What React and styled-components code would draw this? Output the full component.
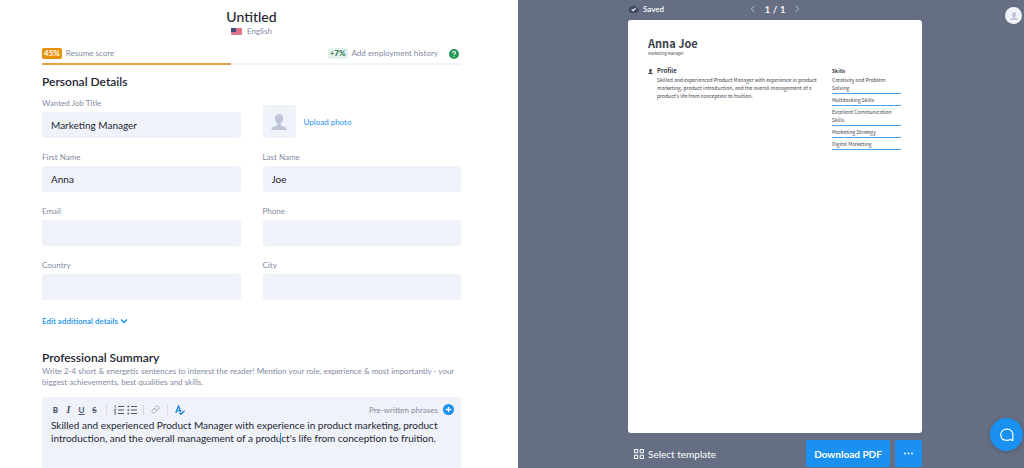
import React from "react"
import styled, { createGlobalStyle } from "styled-components"

const fields = [
  { id: "first", label: "First Name", value: "Anna" },
  { id: "last", label: "Last Name", value: "Joe" },
  { id: "email", label: "Email", value: "" },
  { id: "phone", label: "Phone", value: "" },
  { id: "country", label: "Country", value: "" },
  { id: "city", label: "City", value: "" },
]

const skills = [
  "Creativity and Problem Solving",
  "Multitasking Skills",
  "Excellent Communication Skills",
  "Marketing Strategy",
  "Digital Marketing",
]

const summary =
  "Skilled and experienced Product Manager with experience in product marketing, product introduction, and the overall management of a product's life from conception to fruition."

const Person = ({ size }) => (
  <svg width={size} height={size} viewBox="0 0 16 16" fill="currentColor" aria-hidden="true">
    <path d="M8 0C5.600 0 4 1.700 4 4.300c0 2.100.9 4 2.200 5v1.500c0 .6-.4.9-1 1.100l-3.300 1C.9 13.300.5 14.200.5 16h15c0-1.800-.4-2.700-1.400-3.100l-3.300-1c-.6-.2-1-.5-1-1.100V9.300c1.300-1 2.200-2.900 2.200-5C12 1.700 10.400 0 8 0z" />
  </svg>
)

const Flag = () => (
  <svg width="11" height="7" viewBox="0 0 11 7" aria-hidden="true">
    <rect width="11" height="7" rx="1" fill="#d9607a" />
    <path d="M5 1.300h6M5 3.200h6M0 4.900h11M0 6.300h11" stroke="#e9a4b2" strokeWidth=".5" />
    <rect width="5" height="4" fill="#414c7c" />
  </svg>
)

const Chevron = ({ d, size = 8, width = 1.5 }) => (
  <svg width={size} height={size} viewBox="0 0 8 8" fill="none" stroke="currentColor" strokeWidth={width} aria-hidden="true">
    <path d={d} />
  </svg>
)

const ListIcon = ({ numbered }) => (
  <svg width="10" height="10" viewBox="0 0 10 10" fill="none" stroke="currentColor" aria-hidden="true">
    <path d="M4 1.500h6M4 5h6M4 8.500h6" strokeWidth="1.200" />
    {numbered ? (
      <path d="M.4 1l.9-.6v2.400M.3 4.200h1.600L.4 6h1.700M.3 7.400h1.600l-.8.900c1.300 0 1 1.300-.9 1.100" strokeWidth=".7" />
    ) : (
      <path d="M.5 1.500h1.700M.5 5h1.700M.5 8.500h1.700" strokeWidth="1.700" />
    )}
  </svg>
)

const App = () => {
  return (
    <>
      <GlobalStyle />
      <Shell>
        <Editor>
          <Header>
            <Title>Untitled</Title>
            <Language type="button">
              <Flag />
              English
            </Language>
          </Header>

          <Score>
            <Badge>45%</Badge>
            <span>Resume score</span>
            <Tip>
              <Badge $soft>+7%</Badge>
              <span>Add employment history</span>
              <Help type="button" aria-label="Help">
                <svg width="10" height="10" viewBox="0 0 10 10" aria-hidden="true">
                  <circle cx="5" cy="5" r="5" fill="#259a58" />
                  <path d="M3.500 4.100C3.500 1.900 6.600 2 6.500 4 6.400 4.900 5.100 4.900 5 5.800M5 6.700v1" fill="none" stroke="#fff" strokeWidth="1.100" />
                </svg>
              </Help>
            </Tip>
          </Score>
          <Track>
            <Bar style={{ width: "45%" }} />
          </Track>

          <Heading>Personal Details</Heading>
          <Form>
            <Field>
              <Label htmlFor="job">Wanted Job Title</Label>
              <Input id="job" defaultValue="Marketing Manager" />
            </Field>
            <Photo type="button">
              <PhotoBox>
                <Person size={16} />
              </PhotoBox>
              Upload photo
            </Photo>
            {fields.map(({ id, label, value }) => (
              <Field key={id}>
                <Label htmlFor={id}>{label}</Label>
                <Input id={id} defaultValue={value} />
              </Field>
            ))}
          </Form>
          <More type="button">
            Edit additional details
            <Chevron d="M1 2.500l3 3 3-3" />
          </More>

          <Heading>Professional Summary</Heading>
          <Hint>
            Write 2-4 short & energetic sentences to interest the reader! Mention your role, experience & most
            importantly - your biggest achievements, best qualities and skills.
          </Hint>
          <RichText>
            <Toolbar>
              <Tool type="button"><b>B</b></Tool>
              <Tool type="button"><Italic>I</Italic></Tool>
              <Tool type="button"><u>U</u></Tool>
              <Tool type="button"><s>S</s></Tool>
              <Divider />
              <Tool type="button" aria-label="Numbered list"><ListIcon numbered /></Tool>
              <Tool type="button" aria-label="Bulleted list"><ListIcon /></Tool>
              <Divider />
              <Tool type="button" $color="#a9adbd" aria-label="Link">
                <svg width="9" height="9" viewBox="0 0 24 24" fill="none" stroke="currentColor" strokeWidth="2.500" strokeLinecap="round" aria-hidden="true">
                  <path d="M10 13a5 5 0 0 0 7.500.5l3-3a5 5 0 0 0-7-7l-1.700 1.700M14 11a5 5 0 0 0-7.500-.5l-3 3a5 5 0 0 0 7 7l1.700-1.700" />
                </svg>
              </Tool>
              <Divider />
              <Tool type="button" $color="#1b86dc" aria-label="Spell check">
                <svg width="10" height="10" viewBox="0 0 10 10" fill="none" stroke="currentColor" strokeWidth="1.300" aria-hidden="true">
                  <path d="M.8 8L3.500 1 6 7M1.800 5.600h3.400M4.300 7.700l1.600 1.600 3.600-3.500" />
                </svg>
              </Tool>
              <Phrases type="button">
                Pre-written phrases
                <svg width="11" height="11" viewBox="0 0 11 11" aria-hidden="true">
                  <circle cx="5.500" cy="5.500" r="5.500" fill="#1a91f0" />
                  <path d="M5.500 2.700v5.600M2.700 5.500h5.600" stroke="#fff" strokeWidth="1.300" />
                </svg>
              </Phrases>
            </Toolbar>
            <TextWrap>
              <TextArea aria-label="Professional Summary" defaultValue={summary} />
              <Caret />
            </TextWrap>
          </RichText>
        </Editor>

        <Preview>
          <TopBar>
            <Saved>
              <svg width="11" height="8" viewBox="0 0 11 8" aria-hidden="true">
                <path d="M3 8a3 3 0 0 1-.5-5.800 3.500 3.500 0 0 1 6.200.5A2.700 2.700 0 0 1 8.300 8z" fill="#414960" />
                <path d="M3.800 4.400l1.400 1.300 2.400-2.600" fill="none" stroke="#fff" strokeWidth="1.100" />
              </svg>
              Saved
            </Saved>
            <Pager>
              <PageButton type="button" aria-label="Previous page"><Chevron d="M5.500.8L2.300 4l3.200 3.200" width={1} /></PageButton>
              <span>1 / 1</span>
              <PageButton type="button" aria-label="Next page"><Chevron d="M2.500.8L5.700 4 2.500 7.200" width={1} /></PageButton>
            </Pager>
          </TopBar>

          <Sheet>
            <Name>Anna Joe</Name>
            <Role>Marketing Manager</Role>
            <Columns>
              <ProfileIcon><Person size={5} /></ProfileIcon>
              <div>
                <SheetHeading>Profile</SheetHeading>
                <SheetText>{summary}</SheetText>
              </div>
              <Skills>
                <SheetHeading $small>Skills</SheetHeading>
                <SkillList>
                  {skills.map((skill) => (
                    <Skill key={skill}>{skill}</Skill>
                  ))}
                </SkillList>
              </Skills>
            </Columns>
          </Sheet>

          <BottomBar>
            <Template type="button">
              <svg width="10" height="10" viewBox="0 0 10 10" fill="none" stroke="currentColor" aria-hidden="true">
                <path d="M.5.5h3.300v3.300H.5zM6.200.5h3.300v3.300H6.200zM.5 6.200h3.300v3.300H.5zM6.200 6.200h3.300v3.300H6.200z" />
              </svg>
              Select template
            </Template>
            <Primary type="button">Download PDF</Primary>
            <Primary type="button" $square aria-label="More options">
              <svg width="9" height="3" viewBox="0 0 9 3" fill="currentColor" aria-hidden="true">
                <circle cx="1" cy="1.500" r=".9" />
                <circle cx="4.500" cy="1.500" r=".9" />
                <circle cx="8" cy="1.500" r=".9" />
              </svg>
            </Primary>
          </BottomBar>

          <Account type="button" aria-label="Account"><Person size={8} /></Account>
          <Chat type="button" aria-label="Chat">
            <svg width="14" height="14" viewBox="0 0 14 14" fill="none" stroke="currentColor" strokeWidth="1.200" strokeLinejoin="round" aria-hidden="true">
              <path d="M12.800 12.500V6.800C12.800 3.200 10.600 1.200 7 1.200S.8 3.200.8 6.800s2.300 5.600 6.200 5.600c1.300 0 2.300-.3 3.100-.8z" />
            </svg>
          </Chat>
        </Preview>
      </Shell>
    </>
  )
}

export default App

const GlobalStyle = createGlobalStyle`
  * {
    box-sizing: border-box;
  }
  body {
    margin: 0;
    color: #1e2532;
    font-family: Lato, "Liberation Sans", sans-serif;
    font-size: 8px;
  }
  button {
    padding: 0;
    border: 0;
    background: none;
    color: inherit;
    font: inherit;
    cursor: pointer;
  }
  svg {
    display: block;
    flex: none;
  }
`

const Shell = styled.div`
  display: grid;
  grid-template-columns: 518fr 506fr;
  height: 100vh;
  overflow: hidden;
`

const Editor = styled.main`
  display: flex;
  flex-direction: column;
  min-height: 0;
  padding: 8px 57px 0 42px;
  background: #fff;
`

const Header = styled.header`
  display: flex;
  flex-direction: column;
  align-items: center;
`

const Title = styled.h1`
  margin: 0;
  font-size: 14px;
  font-weight: 500;
  line-height: 17px;
`

const Language = styled.button`
  display: flex;
  align-items: center;
  gap: 5px;
  line-height: 12px;
  color: #828ba2;
`

const Score = styled.div`
  display: flex;
  align-items: center;
  gap: 4px;
  margin-top: 10px;
  line-height: 12px;
  color: #828ba2;
`

const Badge = styled.span`
  padding: 0 2px;
  border-radius: 2px;
  background: ${({ $soft }) => ($soft ? "#e4f4ec" : "#e8920c")};
  color: ${({ $soft }) => ($soft ? "#2c6e4c" : "#fff")};
  font-weight: 700;
  line-height: 11px;
`

const Tip = styled.div`
  display: flex;
  align-items: center;
  gap: 4px;
  margin-left: auto;
`

const Help = styled.button`
  padding: 1px 2px 0 7px;
`

const Track = styled.div`
  height: 2px;
  margin: 4px 0 9px;
  background: #eff2f9;
`

const Bar = styled.div`
  height: 2px;
  background: #e0a244;
`

const Heading = styled.h2`
  margin: 0;
  font-size: 12px;
  font-weight: 600;
  line-height: 16px;
`

const Form = styled.div`
  display: grid;
  grid-template-columns: 1fr 1fr;
  gap: 13px 22px;
  margin-top: 7px;
`

const Field = styled.div`
  display: flex;
  flex-direction: column;
  gap: 3px;
`

const Label = styled.label`
  line-height: 12px;
  color: #828ba2;
`

const Input = styled.input`
  width: 100%;
  height: 26px;
  padding: 0 9px;
  border: 0;
  border-radius: 2px;
  outline: none;
  background: #eff2f9;
  color: #1e2532;
  font: inherit;
  font-size: 10px;
`

const Photo = styled.button`
  display: flex;
  align-items: center;
  align-self: end;
  gap: 8px;
  color: #1a91f0;
`

const PhotoBox = styled.span`
  display: grid;
  place-items: center;
  width: 33px;
  height: 33px;
  border-radius: 2px;
  background: #eff2f9;
  color: #bfc5d9;
`

const More = styled.button`
  display: flex;
  align-items: center;
  align-self: flex-start;
  gap: 2px;
  margin: 15px 0 23px;
  line-height: 12px;
  font-weight: 600;
  color: #1a91f0;
`

const Hint = styled.p`
  margin: 0 0 9px;
  line-height: 11px;
  color: #828ba2;
`

const RichText = styled.section`
  display: flex;
  flex: 1 0 auto;
  flex-direction: column;
  padding: 6px 7px 0 9px;
  border-radius: 2px 2px 0 0;
  background: #eff2f9;
`

const Toolbar = styled.div`
  display: flex;
  align-items: center;
  gap: 4px;
  height: 13px;
`

const Tool = styled.button`
  display: grid;
  place-items: center;
  width: 9px;
  height: 12px;
  color: ${({ $color }) => $color || "#4a5268"};
  font-weight: 700;
`

const Italic = styled.i`
  font-family: "Liberation Serif", serif;
  font-size: 10px;
`

const Divider = styled.span`
  width: 1px;
  height: 11px;
  margin: 0 3px;
  background: #d6dbe8;
`

const Phrases = styled.button`
  display: flex;
  align-items: center;
  gap: 5px;
  margin-left: auto;
  color: #828ba2;
`

const TextWrap = styled.div`
  position: relative;
  margin-top: 3px;
`

const TextArea = styled.textarea`
  display: block;
  width: 100%;
  height: 60px;
  padding: 0;
  border: 0;
  outline: none;
  resize: none;
  overflow: hidden;
  background: none;
  color: #1e2532;
  font: inherit;
  font-size: 10px;
  line-height: 13px;
`

const Caret = styled.span`
  position: absolute;
  top: 14px;
  left: 229px;
  width: 1px;
  height: 11px;
  background: #1a91f0;
`

const Preview = styled.aside`
  position: relative;
  display: flex;
  flex-direction: column;
  min-height: 0;
  padding: 0 102px 0 110px;
  background: #656e83;
  color: #fff;
`

const TopBar = styled.div`
  display: grid;
  grid-template-columns: 1fr auto 1fr;
  align-items: center;
  height: 20px;
  padding-bottom: 2px;
`

const Saved = styled.div`
  display: flex;
  align-items: center;
  gap: 4px;
  font-weight: 600;
`

const Pager = styled.div`
  display: flex;
  align-items: center;
  gap: 7px;
  font-size: 10px;
  font-weight: 600;
`

const PageButton = styled.button`
  color: #b3b9ca;
`

const Sheet = styled.article`
  flex: 1;
  padding: 16px 21px 0 20px;
  border-radius: 3px;
  background: #fff;
  color: #3c414b;
  font-family: "Noto Sans CJK SC", sans-serif;
`

const Name = styled.h2`
  margin: 0;
  font-size: 11px;
  font-weight: 700;
  line-height: 14px;
`

const Role = styled.p`
  margin: 0;
  font-size: 4px;
  line-height: 6px;
`

const Columns = styled.div`
  display: grid;
  grid-template-columns: 5px 1fr 69px;
  column-gap: 4px;
  margin-top: 10px;
`

const ProfileIcon = styled.span`
  padding-top: 3px;
`

const SheetHeading = styled.h3`
  margin: 0;
  font-size: ${({ $small }) => ($small ? "5px" : "6px")};
  font-weight: 700;
  line-height: 10px;
`

const SheetText = styled.p`
  margin: 0;
  font-size: 5px;
  line-height: 8px;
`

const Skills = styled.section`
  min-width: 0;
`

const SkillList = styled.ul`
  display: grid;
  gap: 2px;
  margin: 0;
  padding: 0;
  list-style: none;
`

const Skill = styled.li`
  padding-bottom: 1px;
  border-bottom: 1px solid #4ba3e6;
  font-size: 5px;
  line-height: 8px;
`

const BottomBar = styled.div`
  display: flex;
  align-items: center;
  gap: 5px;
  padding: 7px 0 1px;
`

const Template = styled.button`
  display: flex;
  align-items: center;
  gap: 4px;
  margin-right: auto;
  padding-left: 6px;
  font-size: 10px;
`

const Primary = styled.button`
  display: grid;
  place-items: center;
  width: ${({ $square }) => ($square ? "27px" : "84px")};
  height: 27px;
  border-radius: 2px;
  background: #1a91f0;
  font-size: 10px;
  font-weight: 700;
`

const Account = styled.button`
  position: absolute;
  top: 7px;
  right: 2px;
  display: grid;
  place-items: center;
  width: 17px;
  height: 17px;
  border-radius: 50%;
  background: #eff2f9;
  color: #bfc5d9;
`

const Chat = styled.button`
  position: absolute;
  right: 1px;
  bottom: 17px;
  display: grid;
  place-items: center;
  width: 33px;
  height: 33px;
  border-radius: 50%;
  background: #1a91f0;
  box-shadow: 0 1px 4px rgba(0, 0, 0, 0.2);
`
